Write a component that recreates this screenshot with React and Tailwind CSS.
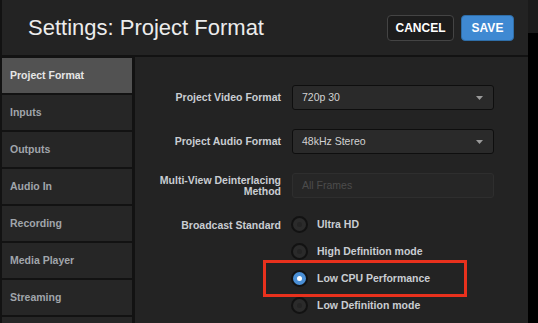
import { useState } from "react";

const menu = ["Project Format", "Inputs", "Outputs", "Audio In", "Recording", "Media Player", "Streaming", ""];

const standards = ["Ultra HD", "High Definition mode", "Low CPU Performance", "Low Definition mode"];

const Select = ({ value }) => (
  <div className="w-[202px] h-[25px] flex items-center justify-between pl-[9px] pr-[10px] bg-[#2a2a2a] border border-[#0e0e0e] rounded-[3px] text-[10.5px] font-normal text-[#d2d2d2]">
    <span>{value}</span>
    <svg width="7" height="4" viewBox="0 0 7 4"><path d="M0 0h7L3.5 4z" fill="#9a9a9a" /></svg>
  </div>
);

const Radio = ({ checked }) => (
  <div className={"w-[17px] h-[17px] rounded-full border-2 border-[#121212] flex items-center justify-center " + (checked ? "bg-[#4a8fd6]" : "bg-[#2b2b2b]")}>
    <div className={"w-[5px] h-[5px] rounded-full " + (checked ? "bg-white" : "bg-[#242424]")} />
  </div>
);

const App = () => {
  const [active] = useState(0);
  const [std] = useState(2);

  return (
    <div className="w-[538px] h-[323px] flex bg-black overflow-hidden font-['Liberation_Sans',Arial,sans-serif]">
      <div className="w-[528px] h-full flex flex-col bg-[#232323] border-l-2 border-[#121212]">
        <div className="h-[57px] shrink-0 flex items-center justify-between pl-[26px] pr-[14px] border-b-2 border-[#121212]">
          <h1 className="text-[22px] text-[#ececec] leading-none">Settings: Project Format</h1>
          <div className="flex gap-[7px]">
            <button className="w-[67px] h-[26px] rounded-[4px] bg-[#1c1c1c] border border-[#444] text-white text-[12px] font-bold">CANCEL</button>
            <button className="w-[53px] h-[26px] rounded-[4px] bg-[#3f89d2] border border-[#2f6ea8] text-white text-[12px] font-bold">SAVE</button>
          </div>
        </div>
        <div className="flex flex-1 min-h-0">
          <div className="w-[133px] shrink-0 flex flex-col gap-[2px] bg-[#121212] border-r-[3px] border-[#121212] pt-px">
            {menu.map((m, i) => (
              <div key={i} className={"h-[35px] shrink-0 flex items-center pl-[8px] text-[10.5px] font-bold " + (i === active ? "bg-[#525252] text-[#e6e6e6]" : "bg-[#262626] text-[#a0a5ab]")}>
                {m}
              </div>
            ))}
          </div>
          <div className="relative flex-1 pt-[28px] flex flex-col gap-[19px] text-[10.5px] font-bold text-[#c9cdd2]">
            <div className="flex items-center gap-[11px]">
              <div className="w-[146px] text-right">Project Video Format</div>
              <Select value="720p 30" />
            </div>
            <div className="flex items-center gap-[11px]">
              <div className="w-[146px] text-right">Project Audio Format</div>
              <Select value="48kHz Stereo" />
            </div>
            <div className="flex items-center gap-[11px]">
              <div className="w-[146px] text-right leading-[11px] pt-px">Multi-View Deinterlacing<br />Method</div>
              <div className="w-[202px] h-[25px] flex items-center pl-[9px] bg-[#262626] border border-[#2e2e2e] rounded-[3px] text-[10.5px] font-normal text-[#4c4c4c]">All Frames</div>
            </div>
            <div className="flex gap-[10px] -mt-px">
              <div className="w-[146px] text-right pt-[2px]">Broadcast Standard</div>
              <div className="flex flex-col gap-[10px]">
                {standards.map((s, i) => (
                  <div key={s} className="flex items-center gap-[9px]">
                    <Radio checked={i === std} />
                    <span>{s}</span>
                  </div>
                ))}
              </div>
            </div>
            <div className="absolute left-[128px] top-[203px] w-[204px] h-[37px] border-[3px] border-[#e8311d]" />
          </div>
        </div>
      </div>
      <div className="flex-1 flex flex-col">
        <div className="h-[33px] bg-[#1b1b1b]" />
      </div>
    </div>
  );
};

export default App;
